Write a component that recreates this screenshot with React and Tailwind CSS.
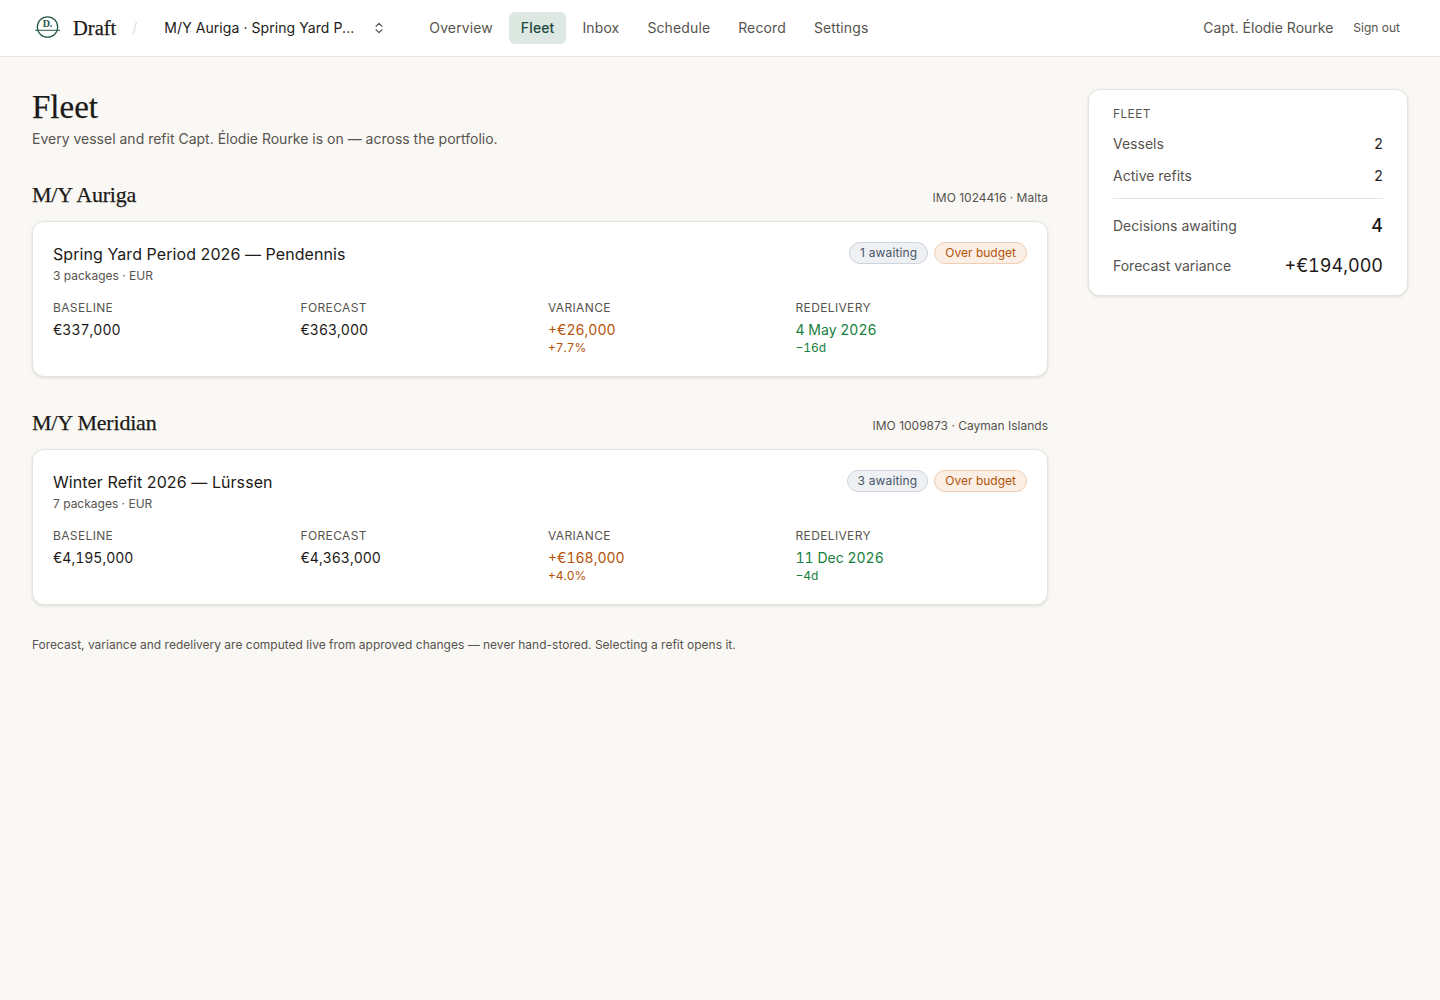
import React from "react";
import { ChevronsUpDown } from "lucide-react";

const serif = "font-['Liberation_Serif',serif] [-webkit-text-stroke:0.25px_#1c1a17]";

function Logo() {
  return (
    <svg width="26" height="24" viewBox="0 0 26 24" fill="none" className="shrink-0">
      <circle cx="13.5" cy="11" r="10.2" stroke="#24574a" strokeWidth="1.2" fill="none" />
      <path d="M1 14.3h25" stroke="#24574a" strokeWidth="1" />
      <text x="13.5" y="11" textAnchor="middle" fontSize="10" fontWeight="700" fill="#24574a" fontFamily="Liberation Serif, serif">D.</text>
    </svg>
  );
}

function Stat({ label, value, sub, tone }) {
  const color = tone === "warn" ? "text-[#b45309]" : tone === "good" ? "text-[#15803d]" : "text-[#1c1a17]";
  return (
    <div>
      <div className="text-xs leading-4 tracking-[0.36px] text-[#57534e]">{label}</div>
      <div className={`mt-[4px] text-sm leading-5 tabular-nums ${color}`}>{value}</div>
      {sub && <div className={`text-xs leading-4 tabular-nums ${color}`}>{sub}</div>}
    </div>
  );
}

function Vessel({ name, meta, title, sub, awaiting, stats }) {
  return (
    <section>
      <div className="flex items-baseline justify-between">
        <h2 className={`${serif} text-[22px] leading-7 font-medium tracking-[-0.2px] text-[#1c1a17]`}>{name}</h2>
        <span className="text-xs leading-4 text-[#57534e]">{meta}</span>
      </div>
      <div className="mt-3 h-[156px] rounded-xl border border-[#e7e4dd] bg-white px-5 pt-[20px] pb-5 shadow-[0_1px_3px_rgba(28,26,23,0.12)]">
        <div className="flex items-start justify-between">
          <div>
            <div className="text-base leading-6 tracking-[0.07px] text-[#1c1a17]">{title}</div>
            <div className="mt-[2px] text-xs leading-4 text-[#57534e]">{sub}</div>
          </div>
          <div className="flex gap-[6px]">
            <span className="h-[22px] rounded-full border border-[#cfd4dc] bg-[#eef0f3] px-[10px] text-xs leading-5 tracking-[0.15px] text-[#475569]">{awaiting}</span>
            <span className="h-[22px] rounded-full border border-[#efcfb5] bg-[#faeee5] px-[10px] text-xs leading-5 text-[#b45309]">Over budget</span>
          </div>
        </div>
        <div className="mt-4 grid grid-cols-4 gap-4">
          {stats.map((s) => <Stat key={s.label} {...s} />)}
        </div>
      </div>
    </section>
  );
}

export default function App() {
  return (
    <div className="min-h-[1000px] bg-[#f9f8f4] font-['Inter',sans-serif] text-[#1c1a17]">
      <header className="flex h-[57px] items-center border-b border-[#e7e4dd] bg-white pl-[34px] pr-10">
        <Logo />
        <span className={`${serif} ml-[13px] text-[20.5px] font-medium leading-7 text-[#1c1a17]`}>Draft</span>
        <span className="ml-[16px] text-sm text-[#e0ddd6]">/</span>
        <span className="ml-[27px] w-[196px] truncate text-sm tracking-[0.07px] text-[#1c1a17]">M/Y Auriga · Spring Yard P...</span>
        <ChevronsUpDown size={14} className="ml-[12px] text-[#57534e]" strokeWidth={2} />
        <nav className="ml-[31px] flex items-center gap-1 text-sm tracking-[0.12px] text-[#57534e]">
          <a className="rounded-md px-3 py-[6px] leading-5">Overview</a>
          <a className="rounded-md bg-[#dde8e2] px-3 py-[6px] font-medium leading-5 text-[#1d4a3d]">Fleet</a>
          <a className="rounded-md px-3 py-[6px] leading-5">Inbox</a>
          <a className="rounded-md px-3 py-[6px] leading-5">Schedule</a>
          <a className="rounded-md px-3 py-[6px] leading-5">Record</a>
          <a className="rounded-md px-3 py-[6px] leading-5">Settings</a>
        </nav>
        <div className="ml-auto flex items-center gap-5">
          <span className="text-sm text-[#57534e]">Capt. Élodie Rourke</span>
          <span className="text-xs text-[#57534e]">Sign out</span>
        </div>
      </header>
      <main className="flex gap-10 px-8 pt-8">
        <div className="w-[1016px]">
          <h1 className={`${serif} text-[33px] font-medium leading-9 text-[#1c1a17]`}>Fleet</h1>
          <p className="mt-1 text-sm leading-5 text-[#57534e]">Every vessel and refit Capt. Élodie Rourke is on — across the portfolio.</p>
          <div className="mt-8 flex flex-col gap-8">
            <Vessel
              name="M/Y Auriga"
              meta="IMO 1024416 · Malta"
              title="Spring Yard Period 2026 — Pendennis"
              sub="3 packages · EUR"
              awaiting="1 awaiting"
              stats={[
                { label: "BASELINE", value: "€337,000" },
                { label: "FORECAST", value: "€363,000" },
                { label: "VARIANCE", value: "+€26,000", sub: "+7.7%", tone: "warn" },
                { label: "REDELIVERY", value: "4 May 2026", sub: "−16d", tone: "good" },
              ]}
            />
            <Vessel
              name="M/Y Meridian"
              meta="IMO 1009873 · Cayman Islands"
              title="Winter Refit 2026 — Lürssen"
              sub="7 packages · EUR"
              awaiting="3 awaiting"
              stats={[
                { label: "BASELINE", value: "€4,195,000" },
                { label: "FORECAST", value: "€4,363,000" },
                { label: "VARIANCE", value: "+€168,000", sub: "+4.0%", tone: "warn" },
                { label: "REDELIVERY", value: "11 Dec 2026", sub: "−4d", tone: "good" },
              ]}
            />
          </div>
          <p className="mt-8 text-xs leading-4 text-[#57534e]">Forecast, variance and redelivery are computed live from approved changes — never hand-stored. Selecting a refit opens it.</p>
        </div>
        <aside className="h-[207px] w-[320px] rounded-xl border border-[#e7e4dd] bg-white px-6 pt-[16px] shadow-[0_1px_3px_rgba(28,26,23,0.12)]">
          <div className="text-xs leading-4 tracking-[0.36px] text-[#57534e]">FLEET</div>
          <div className="mt-3 flex items-center justify-between text-sm leading-5">
            <span className="text-[#57534e]">Vessels</span><span className="tabular-nums">2</span>
          </div>
          <div className="mt-3 flex items-center justify-between text-sm leading-5">
            <span className="text-[#57534e]">Active refits</span><span className="tabular-nums">2</span>
          </div>
          <div className="mt-3 border-t border-[#e7e4dd]" />
          <div className="mt-[13px] flex items-center justify-between">
            <span className="text-sm leading-5 text-[#57534e]">Decisions awaiting</span><span className="text-lg leading-7 font-medium tabular-nums">4</span>
          </div>
          <div className="mt-3 flex items-center justify-between">
            <span className="text-sm leading-5 text-[#57534e]">Forecast variance</span><span className="text-lg leading-7 tabular-nums">+€194,000</span>
          </div>
        </aside>
      </main>
    </div>
  );
}
